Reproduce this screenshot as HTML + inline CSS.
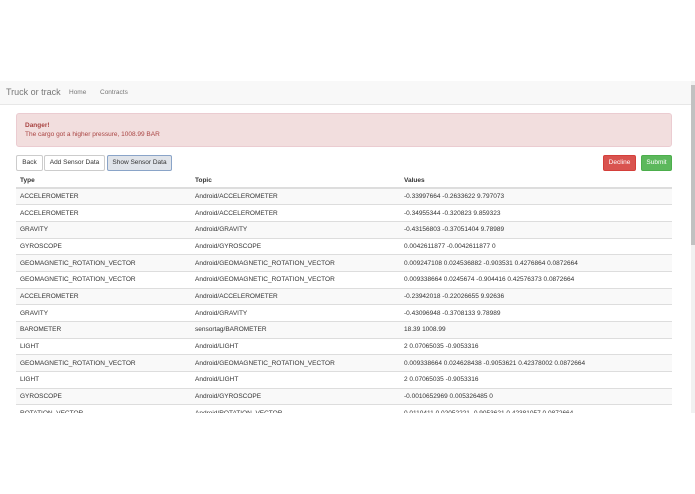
<!DOCTYPE html><html><head><style>
body{margin:0;width:695px;height:494px;background:#fff;font-family:"Liberation Sans",sans-serif;position:relative;overflow:hidden;color:#333}
.vp{position:absolute;left:0;top:81px;width:691px;height:332px;overflow:hidden}
.nav{position:absolute;left:0;top:0;width:691px;height:23px;background:#f8f8f8;border-bottom:1px solid #e7e7e7}
.brand{position:absolute;left:6px;top:6px;font-size:9px;color:#777}
.nl{position:absolute;top:8px;font-size:6.5px;color:#777}
.alert{position:absolute;left:16px;top:32px;width:656px;height:34px;box-sizing:border-box;background:#f2dede;border:1px solid #ebccd1;border-radius:3px;color:#a94442;font-size:6.5px;padding:7px 8px;line-height:9px}
.btn{position:absolute;top:74px;height:16px;box-sizing:border-box;border:1px solid #ccc;border-radius:2px;font-size:6.5px;line-height:14px;text-align:center;background:#fff}
table{position:absolute;left:16px;top:92px;width:656px;border-collapse:collapse;font-size:6.5px;table-layout:fixed}
td,th{text-align:left;padding:0 4px;height:16.7px;box-sizing:border-box;border-top:1px solid #ddd;white-space:nowrap;overflow:hidden}
th{border-top:none;border-bottom:2px solid #ddd;font-weight:bold;height:15px}
tbody tr:nth-child(odd){background:#f9f9f9}
.sb{position:absolute;left:691px;top:81px;width:4px;height:332px;background:#f1f1f1}
.th{position:absolute;left:691px;top:85px;width:4px;height:160px;background:#c1c1c1}
</style></head><body>
<div class="vp">
<div class="nav"><span class="brand">Truck or track</span><span class="nl" style="left:69px">Home</span><span class="nl" style="left:100px">Contracts</span></div>
<div class="alert"><b>Danger!</b><br>The cargo got a higher pressure, 1008.99 BAR</div>
<div class="btn" style="left:16px;width:27px">Back</div>
<div class="btn" style="left:44px;width:61px">Add Sensor Data</div>
<div class="btn" style="left:107px;width:65px;background:#e0e4ea;border-color:#8aa4c8">Show Sensor Data</div>
<div class="btn" style="left:603px;width:33px;background:#d9534f;border-color:#d43f3a;color:#fff">Decline</div>
<div class="btn" style="left:641px;width:31px;background:#5cb85c;border-color:#4cae4c;color:#fff">Submit</div>
<table><colgroup><col style="width:175px"><col style="width:209px"><col></colgroup><thead><tr><th>Type</th><th>Topic</th><th>Values</th></tr></thead><tbody>
<tr><td>ACCELEROMETER</td><td>Android/ACCELEROMETER</td><td>-0.33997664 -0.2633622 9.797073</td></tr>
<tr><td>ACCELEROMETER</td><td>Android/ACCELEROMETER</td><td>-0.34955344 -0.320823 9.859323</td></tr>
<tr><td>GRAVITY</td><td>Android/GRAVITY</td><td>-0.43156803 -0.37051404 9.78989</td></tr>
<tr><td>GYROSCOPE</td><td>Android/GYROSCOPE</td><td>0.0042611877 -0.0042611877 0</td></tr>
<tr><td>GEOMAGNETIC_ROTATION_VECTOR</td><td>Android/GEOMAGNETIC_ROTATION_VECTOR</td><td>0.009247108 0.024536882 -0.903531 0.4276864 0.0872664</td></tr>
<tr><td>GEOMAGNETIC_ROTATION_VECTOR</td><td>Android/GEOMAGNETIC_ROTATION_VECTOR</td><td>0.009338664 0.0245674 -0.904416 0.42576373 0.0872664</td></tr>
<tr><td>ACCELEROMETER</td><td>Android/ACCELEROMETER</td><td>-0.23942018 -0.22026655 9.92636</td></tr>
<tr><td>GRAVITY</td><td>Android/GRAVITY</td><td>-0.43096948 -0.3708133 9.78989</td></tr>
<tr><td>BAROMETER</td><td>sensortag/BAROMETER</td><td>18.39 1008.99</td></tr>
<tr><td>LIGHT</td><td>Android/LIGHT</td><td>2 0.07065035 -0.9053316</td></tr>
<tr><td>GEOMAGNETIC_ROTATION_VECTOR</td><td>Android/GEOMAGNETIC_ROTATION_VECTOR</td><td>0.009338664 0.024628438 -0.9053621 0.42378002 0.0872664</td></tr>
<tr><td>LIGHT</td><td>Android/LIGHT</td><td>2 0.07065035 -0.9053316</td></tr>
<tr><td>GYROSCOPE</td><td>Android/GYROSCOPE</td><td>-0.0010652969 0.005326485 0</td></tr>
<tr><td>ROTATION_VECTOR</td><td>Android/ROTATION_VECTOR</td><td>0.0110411 0.02052221 -0.9053621 0.42381057 0.0872664</td></tr>
</tbody></table>
</div>
<div class="sb"></div><div class="th"></div>
</body></html>
